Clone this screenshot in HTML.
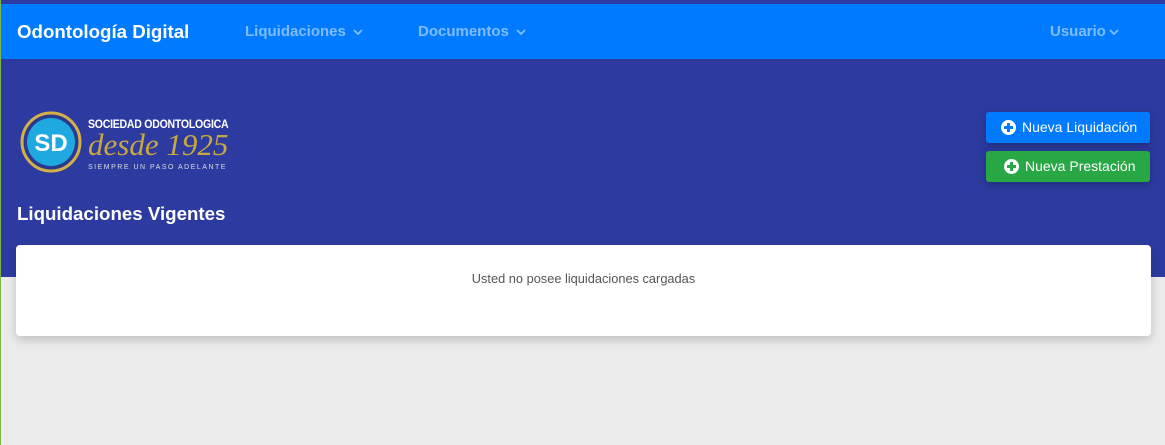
<!DOCTYPE html>
<html><head><meta charset="utf-8"><style>
*{margin:0;padding:0;box-sizing:border-box}
body{width:1165px;height:445px;overflow:hidden;background:#ebebeb;font-family:"Liberation Sans",Arial,sans-serif;position:relative}
.top{position:absolute;left:0;top:0;width:1165px;height:4px;background:#2d3ba0}
.nav{position:absolute;left:0;top:4px;width:1165px;height:55px;background:#007bff}
.brand{position:absolute;left:17px;top:17px;color:#fff;font-weight:bold;font-size:18.7px}
.ni{position:absolute;top:19px;color:#80bdff;font-weight:bold;font-size:15px}
.ni svg{vertical-align:middle;margin-left:6px}
.hero{position:absolute;left:0;top:59px;width:1165px;height:218px;background:#2d3ba0}
.leftline{position:absolute;left:0;top:0;width:1px;height:445px;background:#7ab648}
.btn{position:absolute;left:986px;width:164px;height:31px;border-radius:3px;color:#fff;font-size:14px;line-height:31px;box-shadow:0 3px 8px rgba(0,0,0,.25)}
.btn .c{display:inline-block;width:15px;height:15px;border-radius:50%;background:#fff;vertical-align:-3px;margin:0 6px 0 15px;position:relative}
.btn .c:before{content:"";position:absolute;left:3px;top:6px;width:9px;height:3px}
.btn .c:after{content:"";position:absolute;left:6px;top:3px;width:3px;height:9px}
.b1{top:112px;background:#007bff}.b1 .c:before,.b1 .c:after{background:#007bff}
.b2{top:151px;background:#28a745}.b2 .c:before,.b2 .c:after{background:#28a745}
.b2 .c{margin-left:18px}
h2{position:absolute;left:17px;top:203px;color:#fff;font-size:18.7px;font-weight:bold}
.card{position:absolute;left:16px;top:245px;width:1135px;height:91px;background:#fff;border-radius:4px;box-shadow:0 4px 10px rgba(0,0,0,.18);text-align:center;font-size:12.8px;color:#555;padding-top:26px}
</style></head><body>
<div class="top"></div>
<div class="nav">
<div class="brand">Odontología Digital</div>
<div class="ni" style="left:245px">Liquidaciones<svg width="12" height="8" viewBox="0 0 12 8"><path d="M2 2l4 4 4-4" stroke="#80bdff" stroke-width="1.8" fill="none"/></svg></div>
<div class="ni" style="left:418px">Documentos<svg width="12" height="8" viewBox="0 0 12 8"><path d="M2 2l4 4 4-4" stroke="#80bdff" stroke-width="1.8" fill="none"/></svg></div>
<div class="ni" style="left:1050px">Usuario<svg width="12" height="8" viewBox="0 0 12 8" style="margin-left:2px"><path d="M2 2l4 4 4-4" stroke="#80bdff" stroke-width="1.8" fill="none"/></svg></div>
</div>
<div class="hero">
<svg style="position:absolute;left:20px;top:52px" width="62" height="62" viewBox="0 0 62 62">
<circle cx="31" cy="31" r="29" fill="#2a3a8f" stroke="#d4b04a" stroke-width="3"/>
<circle cx="31" cy="31" r="24" fill="#1fa9e0"/>
<text x="31" y="40" text-anchor="middle" font-size="24" font-family="Liberation Sans" fill="#fff" font-weight="bold">SD</text>
</svg>
<div style="position:absolute;left:88px;top:58px;color:#fff;font-weight:bold;font-size:12px;letter-spacing:-0.3px;transform:scaleX(.88);transform-origin:left">SOCIEDAD ODONTOLOGICA</div>
<div style="position:absolute;left:88px;top:69px;color:#c9a93e;font-style:italic;font-family:'Liberation Serif',serif;font-size:31px;line-height:34px">desde 1925</div>
<div style="position:absolute;left:88px;top:105px;color:#ddd;font-size:7px;letter-spacing:1.5px">SIEMPRE UN PASO ADELANTE</div>
</div>
<div class="btn b1"><span class="c"></span>Nueva Liquidación</div>
<div class="btn b2"><span class="c"></span>Nueva Prestación</div>
<h2>Liquidaciones Vigentes</h2>
<div class="card">Usted no posee liquidaciones cargadas</div>
<div class="leftline"></div>
</body></html>
